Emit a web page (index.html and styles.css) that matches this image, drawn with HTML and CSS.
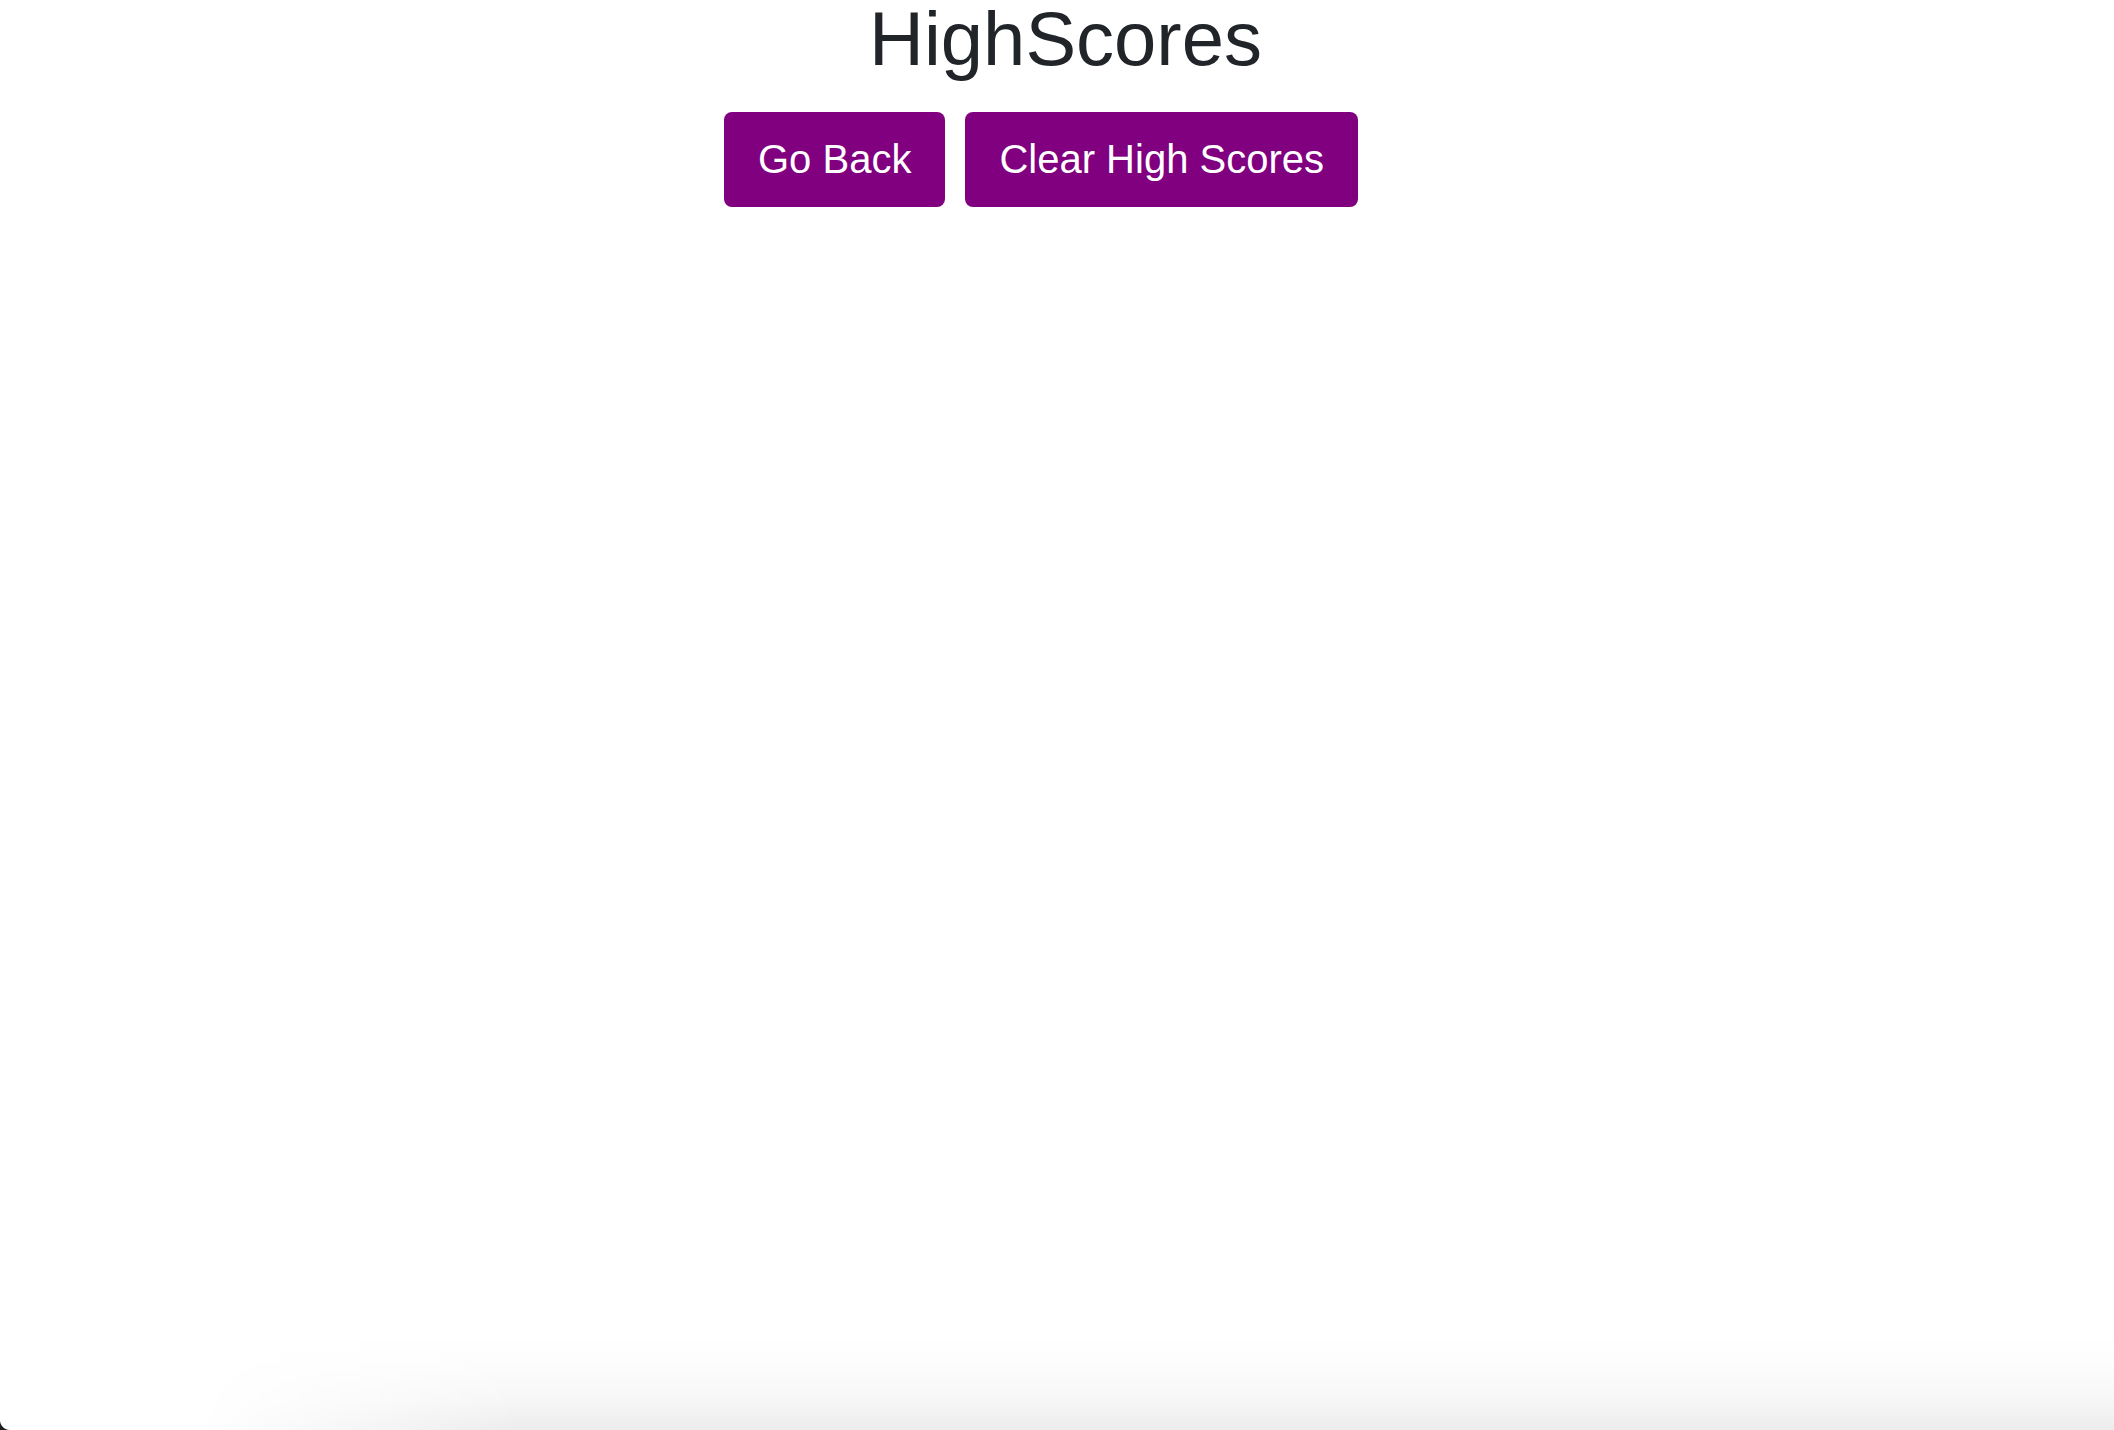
FILE: index.html
```html
<!DOCTYPE html>
<html lang="en">
<head>
<meta charset="utf-8">
<title>HighScores</title>
<link rel="stylesheet" href="styles.css">
</head>
<body>
<main class="page">
  <h1 class="title">HighScores</h1>
  <div class="actions">
    <button class="btn" type="button">Go Back</button>
    <button class="btn" type="button">Clear High Scores</button>
  </div>
  <ol class="scores"></ol>
</main>
<div class="bottom-shade"></div>
<div class="window-corner"></div>
</body>
</html>
```
FILE: styles.css
```css
html, body {
  margin: 0;
  height: 100%;
  overflow: hidden;
  background: #ffffff;
}

body {
  font-family: "Liberation Sans", Arial, Helvetica, sans-serif;
  color: #212529;
  position: relative;
}

.page {
  display: flex;
  flex-direction: column;
  align-items: center;
}

.title {
  margin: 0;
  padding: 1px 0 0 17px;
  font-size: 76px;
  font-weight: 400;
  line-height: 76px;
  color: #212529;
}

.actions {
  display: flex;
  gap: 20px;
  margin-top: 35px;
  padding-right: 32px;
}

.btn {
  font-family: "Liberation Sans", Arial, Helvetica, sans-serif;
  font-size: 40px;
  line-height: 61px;
  padding: 17px 34px;
  border: 0;
  border-radius: 8px;
  background: #800080;
  color: #ffffff;
  cursor: pointer;
}

.scores {
  margin: 0;
  padding: 0;
  list-style: none;
}

.bottom-shade {
  position: absolute;
  left: 0;
  right: 0;
  bottom: 0;
  height: 95px;
  background: linear-gradient(to bottom, rgba(0,0,0,0) 0%, rgba(0,0,0,0.012) 35%, rgba(0,0,0,0.035) 70%, rgba(0,0,0,0.075) 100%);
  -webkit-mask-image: linear-gradient(to right, transparent 200px, #000 520px);
  mask-image: linear-gradient(to right, transparent 200px, #000 520px);
  pointer-events: none;
}

.window-corner {
  position: absolute;
  left: 0;
  bottom: 0;
  width: 10px;
  height: 10px;
  background: radial-gradient(circle at 10px 0, transparent 9.5px, #1e1e1e 10.5px);
  pointer-events: none;
}
```
